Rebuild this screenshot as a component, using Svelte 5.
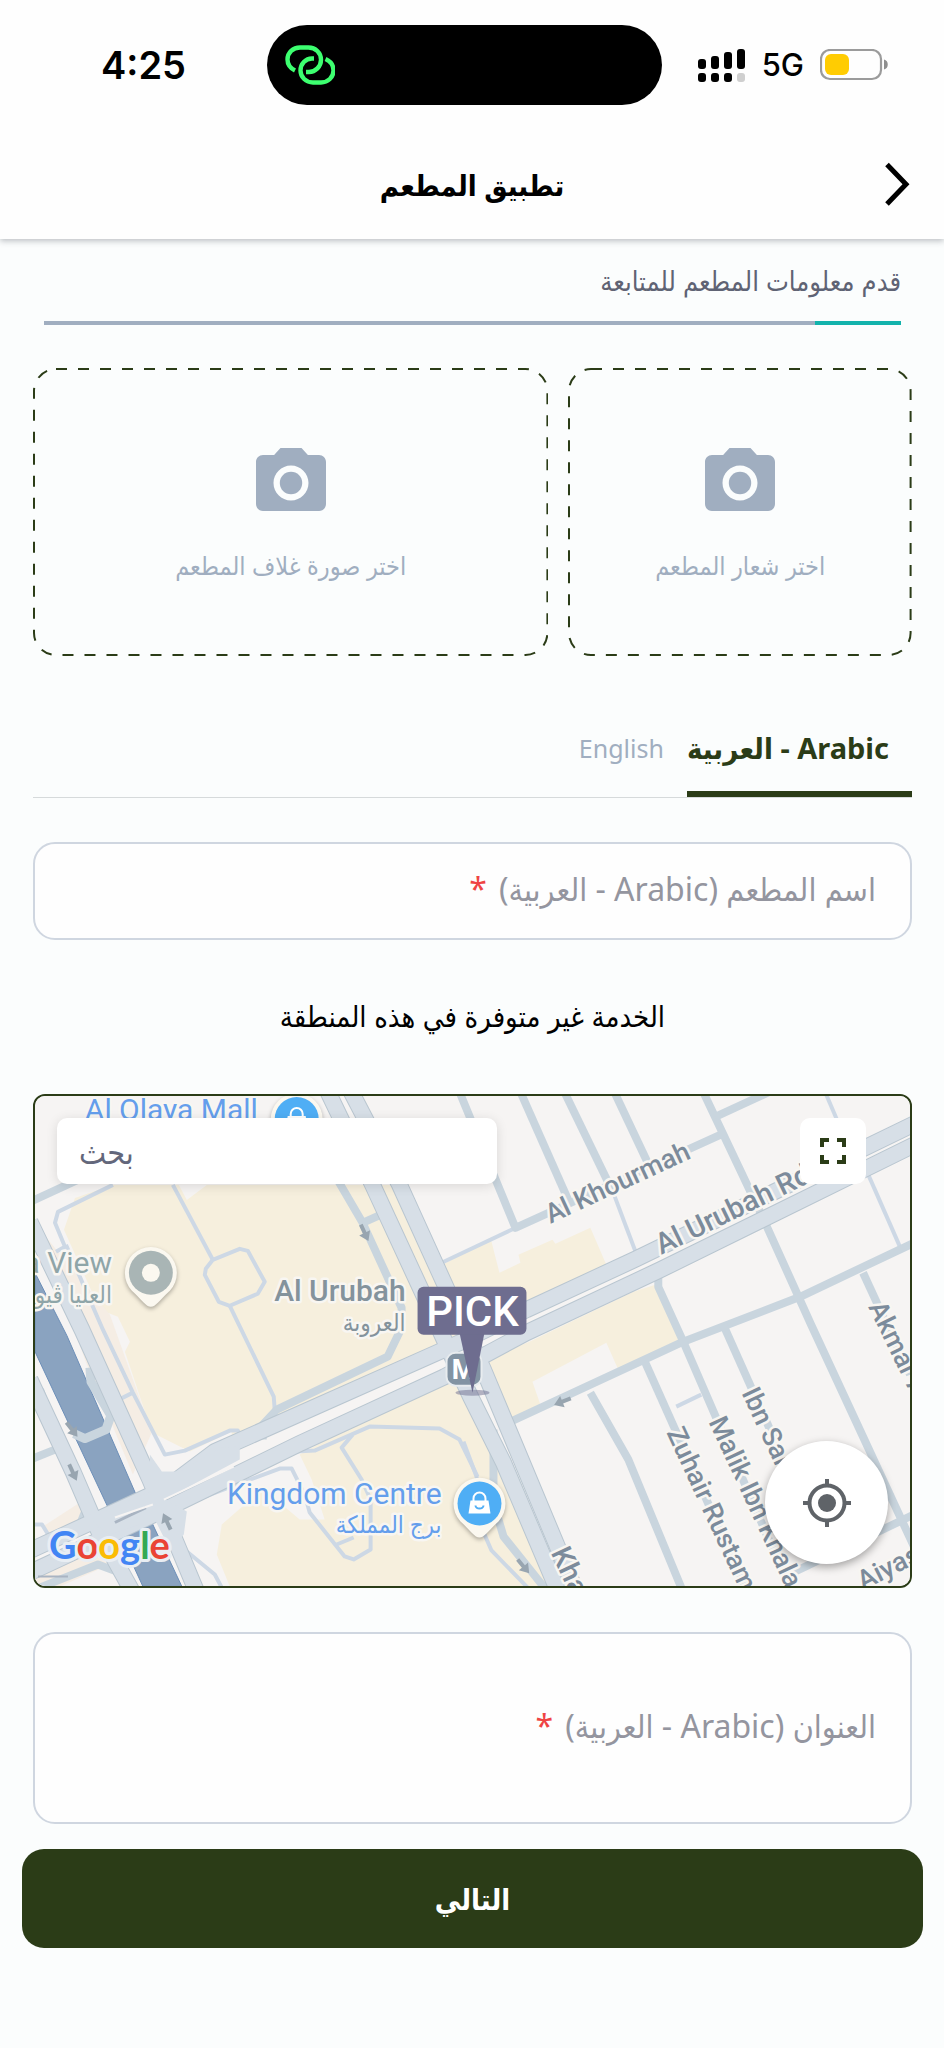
<script lang="ts">
  type Lang = 'ar' | 'en';

  const TABS: { id: Lang; label: string }[] = [
    { id: 'ar', label: 'العربية - Arabic' },
    { id: 'en', label: 'English' },
  ];

  const UPLOADS = [
    { id: 'logo', label: 'اختر شعار المطعم' },
    { id: 'cover', label: 'اختر صورة غلاف المطعم' },
  ];

  const STREETS = [
    'M460 12 516 148 721 55',
    'M521 12 571 125',
    'M565 12 614 113',
    'M615 12 649 84',
    'M704 12 766 143 812 245 901 437 920 478',
    'M716 37 770 12',
    'M915 163 801 217 684 262 509 343',
    'M864 193 911 295',
    'M659 190 659 207 684 262 790 507',
    'M724 245 820 460',
    'M646 283 746 507',
    'M591 313 629 380 684 513',
    'M915 435 790 495',
    'M338 100 363 143 402 228 402 248 388 277 277 330 263 345 263 360',
    'M30 122 80 99',
    'M494 350 494 423 504 457 548 512',
    'M30 380 60 368',
    'M40 310 52 345 88 425 80 445 60 460',
    'M35 510 98 485 125 495',
    'M363 143 383 134',
  ];

  const PATHS = [
    'M440 184 516 148',
    'M614 113 637 174',
    'M826 12 838 40',
    'M868 92 901 167',
    'M677 327 702 315',
    'M113 105 58 132 55 143 65 167 56 172',
    'M66 165 103 250 133 313 165 375 185 371 230 351 238 351 245 362',
    'M119 320 133 313',
    'M173 105 213 180',
    'M213 180 240 169 248 171 265 202 258 214 230 226 219 222 205 195 206 189Z',
    'M230 226 274 317 275 330',
    'M296 372 315 371 370 347 440 349 460 360 478 397',
    'M353 355 342 368 362 400 371 420 371 470 354 480 345 477 310 433 305 415 292 389 280 389 250 400 205 417',
    'M337 465 354 458',
    'M464 362 477 397 485 455 492 471 530 510',
    'M187 472 215 495 224 512',
    'M35 445 42 445 50 458',
  ];

  const AVENUES = [
    'M30 142 82 250 150 400 175 460 198 515',
    'M30 300 73 392 98 450 134 515',
    'M325 5 373 105 471 317 504 383 560 515',
    'M348 5 400 105 484 290 507 345 578 515',
    'M28 472 167 408 215 372 460 263 527 230 637 179 915 44',
    'M28 494 167 429 300 364 445 297 527 253 661 190 915 65',
  ];

  const ARROWS = [
    { x: 365, y: 153, a: 65 },
    { x: 72, y: 350, a: 52 },
    { x: 73, y: 393, a: 65 },
    { x: 167, y: 442, a: -115 },
    { x: 563, y: 322, a: 158 },
    { x: 524, y: 487, a: 50 },
  ];

  const ROAD_LABELS = [
    { text: 'Al Khourmah', x: 551, y: 144, a: -25, big: false },
    { text: 'Al Urubah Rd', x: 662, y: 175, a: -26, big: true },
    { text: 'Akmar A', x: 869, y: 227, a: 64, big: false },
    { text: 'Ibn Sar', x: 742, y: 313, a: 65, big: false },
    { text: 'Malik Ibn Khala', x: 709, y: 342, a: 65, big: false },
    { text: 'Zuhair Rustam', x: 667, y: 353, a: 65, big: false },
    { text: 'Kha', x: 551, y: 473, a: 65, big: true },
    { text: 'Aiyas', x: 864, y: 511, a: -27, big: false },
  ];

  let lang = $state<Lang>('ar');
  let name = $state('');
  let address = $state('');
  let query = $state('');
</script>

<div class="screen" dir="rtl">
  <div class="status" dir="ltr">
    <span class="time">4:25</span>
    <div class="island">
      <svg width="50" height="40" viewBox="0 0 50 40" fill="none" stroke="#3dff70" stroke-width="4.4" aria-hidden="true">
        <path d="M10 25.500C5 23 2.500 19 2.500 14.500 2.500 7.500 8 2.500 15 2.500h8.500c7 0 12.500 5.300 12.500 12.200 0 6.800-5.500 12.300-12 12.300H21" />
        <path d="M29 13.500h-2c-6.500 0-11.500 5.500-11.500 12 0 6.700 5.500 12 12.500 12h8C43 37.500 48.500 32.200 48.500 25.500 48.500 20.500 45.500 16.200 40.500 14" />
      </svg>
    </div>
    <div class="signals">
      <svg width="48" height="33" viewBox="0 0 48 33" aria-hidden="true">
        <rect x="0" y="10" width="8" height="10" rx="3" />
        <rect x="13" y="7" width="8" height="13" rx="3" />
        <rect x="26" y="3" width="8" height="17" rx="3" />
        <rect x="39" y="0" width="8" height="20" rx="3" />
        <rect x="0" y="24" width="8" height="9" rx="3" />
        <rect x="13" y="24" width="8" height="9" rx="3" />
        <rect x="26" y="24" width="8" height="9" rx="3" />
        <rect x="39" y="24" width="8" height="9" rx="3" fill="#cfcfcf" />
      </svg>
      <span class="network">5G</span>
      <svg width="69" height="32" viewBox="0 0 69 32" aria-hidden="true">
        <rect x="1" y="1" width="60" height="29" rx="9" fill="none" stroke="#9b9b9b" stroke-width="2.200" />
        <rect x="5" y="5" width="24" height="21" rx="6" fill="#ffcc02" />
        <path d="M64 10.500c5 1 5 9 0 10z" fill="#8e8e8e" />
      </svg>
    </div>
  </div>

  <header class="appbar">
    <button type="button" class="back" aria-label="رجوع">
      <svg width="28" height="44" viewBox="0 0 28 44" fill="none" stroke="#000" stroke-width="5" aria-hidden="true"><path d="M3 2.500 22 22.200 3 42" /></svg>
    </button>
    <h1>تطبيق المطعم</h1>
  </header>

  <main>
    <section class="progress">
      <p>قدم معلومات المطعم للمتابعة</p>
      <div class="track" role="progressbar" aria-label="التقدم" aria-valuenow="10" aria-valuemin="0" aria-valuemax="100">
        <div class="bar" style="width: {10}%"></div>
      </div>
    </section>

    <div class="uploads">
      {#each UPLOADS as item (item.id)}
        <button type="button" class="upload {item.id}">
          <svg class="dashes" aria-hidden="true"><rect x="1" y="1" rx="22" /></svg>
          <svg width="84" height="84" viewBox="0 0 24 24" fill="#a0aec0" aria-hidden="true">
            <circle cx="12" cy="12" r="3.200" />
            <path d="M9 2 7.170 4H4c-1.100 0-2 .9-2 2v12c0 1.100.9 2 2 2h16c1.100 0 2-.9 2-2V6c0-1.100-.9-2-2-2h-3.170L15 2H9zm3 15c-2.760 0-5-2.240-5-5s2.240-5 5-5 5 2.240 5 5-2.240 5-5 5z" />
          </svg>
          <span>{item.label}</span>
        </button>
      {/each}
    </div>

    <div class="tabs" role="tablist">
      {#each TABS as tab (tab.id)}
        <button
          type="button"
          role="tab"
          class="tab"
          class:on={lang === tab.id}
          aria-selected={lang === tab.id}
          dir="ltr"
          onclick={() => (lang = tab.id)}
        >
          {tab.label}
        </button>
      {/each}
    </div>

    <div class="field">
      <input id="name" type="text" bind:value={name} />
      {#if !name}
        <label for="name">اسم المطعم (Arabic - العربية) <b>*</b></label>
      {/if}
    </div>

    <p class="notice">الخدمة غير متوفرة في هذه المنطقة</p>

    <div class="map" dir="ltr">
      <svg class="tiles" viewBox="35 16 876 491" preserveAspectRatio="xMidYMid slice" role="img" aria-label="خريطة">
        <rect x="35" y="16" width="876" height="491" fill="#f6f4f3" />
        <g fill="#f6efdd">
          <path d="M113 105 75 118 64 150 82 190 100 230 118 237 130 262 125 272 152 353 190 372 232 352 232 365 300 340 470 262 400 105H207L187 120 179 105Z" />
          <path d="M300 375 430 303 470 305 500 385 550 507H230L217 475 222 445 245 425 262 408 300 440 325 440 312 400Z" />
          <path d="M443 185 491 158 500 193 521 183 519 175 553 160 556 164 591 148 607 185 475 255Z" />
          <path d="M484 280 530 262 634 212 656 205 684 262 619 290 607 263 533 302 541 325 509 342Z" />
        </g>
        <path d="M400 105 420 105 443 184 432 175Z" fill="#f6f4f3" />
        <path d="M40 150 110 235 152 353 133 395 85 280ZM43 447 80 423 85 440 55 465ZM35 490 85 470 110 485 60 507H35Z" fill="#f5ede4" />
        <path d="M35 193 67 256 137 417 110 432 35 272ZM120 457 152 443 182 507H143Z" fill="#8aa3c0" stroke="#6c8fb8" />

        <g fill="none" stroke-linejoin="round">
          {#each PATHS as d}
            <path {d} stroke="#cdd8e5" stroke-width="4" />
          {/each}
          {#each STREETS as d}
            <path {d} stroke="#c9d5de" stroke-width="8" />
          {/each}
          <path d="M90 288 91 302 111 336 106 350 85 359 74 354" stroke="#c9d5de" stroke-width="9" />
          {#each AVENUES as d}
            <path {d} stroke="#b9c6d0" stroke-width="17" />
          {/each}
          {#each AVENUES as d}
            <path {d} stroke="#d7dfe7" stroke-width="15" />
          {/each}
        </g>
        <path d="M150 375 162 392 180 392 222 368 240 367 240 380 165 420 187 432 184 455 170 470 155 440 110 455 90 440 105 432 150 412Z" fill="#d7dfe7" />
        <path d="M115 443 146 428" stroke="#a9b4c2" stroke-width="3" />
        <path d="M164 420 234 387M115 438 153 425" stroke="#f6f4f3" stroke-width="2" />

        {#each ARROWS as arrow}
          <path d="M-9-2H0V-6L9 0 0 6V2H-9Z" fill="#98a5b0" transform="translate({arrow.x} {arrow.y}) rotate({arrow.a})" />
        {/each}

        <g class="road-labels">
          {#each ROAD_LABELS as road}
            <text class:big={road.big} transform="translate({road.x} {road.y}) rotate({road.a})">{road.text}</text>
          {/each}
        </g>

        <g class="places" text-anchor="end">
          <text class="blue" x="258" y="40">Al Olaya Mall</text>
          <text class="blue" x="442" y="424">Kingdom Centre</text>
          <text class="blue ar" x="442" y="454">برج المملكة</text>
          <text class="teal" x="112" y="193">a View</text>
          <text class="teal ar" x="112" y="223">العليا ڤيو</text>
          <text class="grey" x="406" y="221">Al Urubah</text>
          <text class="grey ar" x="406" y="251">العروبة</text>
        </g>

        <g class="pin" transform="translate(151 193)">
          <path d="M0 34C-5 34-8 28-19 18A26 26 0 1 1 19 18C8 28 5 34 0 34Z" fill="#fbf8f0" />
          <circle r="22" fill="#a9b5b5" />
          <circle r="9" fill="#fbf8f0" />
        </g>
        {#each [[480, 424], [297, 39]] as [x, y]}
          <g class="pin" transform="translate({x} {y})">
            <path d="M0 34C-5 34-8 28-19 18A26 26 0 1 1 19 18C8 28 5 34 0 34Z" fill="#fbf8f0" />
            <circle r="22" fill="#4faef5" />
            <path d="M-9-3H9L11 10H-11Z" fill="#fff" />
            <path d="M-6-2V-5a6 6 0 0 1 12 0V-2" fill="none" stroke="#fff" stroke-width="2" />
            <path d="M-4 2a4 3 0 0 0 8 0" fill="none" stroke="#4faef5" stroke-width="2" />
          </g>
        {/each}

        <rect x="447" y="273" width="35" height="33" rx="9" fill="#8293a3" stroke="#e8ecef" stroke-width="2" />
        <text class="metro" x="464" y="299" text-anchor="middle">M</text>
        <ellipse cx="473" cy="313" rx="17" ry="3" fill="#6e6d8f" opacity="0.5" />
        <path d="M460 253H485L473 313Z" fill="#6e6d8f" />
        <rect x="418" y="207" width="109" height="48" rx="6" fill="#6e6d8f" />
        <text class="pick" x="473" y="246" text-anchor="middle">PICK</text>

        <path d="M38 497H68" stroke="#a9b4c2" stroke-width="2" />
        <text class="google" x="49" y="480"><tspan fill="#4285f4">G</tspan><tspan fill="#ea4335">o</tspan><tspan fill="#fbbc05">o</tspan><tspan fill="#4285f4">g</tspan><tspan fill="#34a853">l</tspan><tspan fill="#ea4335">e</tspan></text>
      </svg>

      <input class="search" type="text" placeholder="بحث" aria-label="بحث" bind:value={query} />
      <button type="button" class="expand" aria-label="ملء الشاشة">
        <svg width="26" height="26" viewBox="0 0 26 26" fill="none" stroke="#2b3c17" stroke-width="4" aria-hidden="true"><path d="M2 9V2H9M17 2H24V9M24 17V24H17M9 24H2V17" /></svg>
      </button>
      <button type="button" class="locate" aria-label="موقعي">
        <svg width="48" height="48" viewBox="0 0 48 48" fill="none" stroke="#5f6368" stroke-width="4" aria-hidden="true">
          <circle cx="24" cy="24" r="17.500" />
          <circle cx="24" cy="24" r="9" fill="#5f6368" stroke="none" />
          <path d="M24 0V6M24 42V48M0 24H6M42 24H48" />
        </svg>
      </button>
    </div>

    <div class="field">
      <textarea id="address" bind:value={address}></textarea>
      {#if !address}
        <label for="address">العنوان (Arabic - العربية) <b>*</b></label>
      {/if}
    </div>
  </main>

  <footer>
    <button type="button" class="next">التالي</button>
  </footer>
</div>

<style>
  :global(body) {
    margin: 0;
    background: #fbfdfd;
  }
  .screen {
    font-family: 'Noto Sans', 'DejaVu Sans Condensed', 'DejaVu Sans', sans-serif;
    color: #000;
    background: #fbfdfd;
    overflow: hidden;
  }
  button,
  input,
  textarea {
    font: inherit;
    box-sizing: border-box;
    margin: 0;
  }
  button {
    padding: 0;
    border: 0;
    background: none;
    cursor: pointer;
  }
  p,
  h1 {
    margin: 0;
  }
  svg {
    display: block;
    flex-shrink: 0;
  }

  .status {
    position: relative;
    z-index: 1;
    display: grid;
    grid-template-columns: 1fr 395px 1fr;
    align-items: center;
    padding: 25px 16px 25px 0;
    background: #fefefe;
    font-family: Inter, sans-serif;
  }
  .time {
    padding-left: 101px;
    font-size: 38px;
    font-weight: 600;
    line-height: 46px;
  }
  .island {
    display: flex;
    align-items: center;
    height: 80px;
    padding-left: 18px;
    border-radius: 40px;
    background: #000;
    box-sizing: border-box;
  }
  .signals {
    display: flex;
    align-items: center;
    justify-content: flex-end;
    gap: 16px;
    padding-right: 39px;
  }
  .network {
    font-size: 31px;
    font-weight: 500;
    line-height: 40px;
  }

  .appbar {
    position: relative;
    display: flex;
    align-items: center;
    justify-content: center;
    height: 109px;
    background: #fefefe;
    box-shadow: 0 2px 6px rgba(40, 45, 60, 0.3);
  }
  .back {
    position: absolute;
    right: 32px;
    top: 32px;
  }
  h1 {
    font-size: 29px;
    font-weight: 600;
    line-height: 48px;
  }

  main {
    padding: 20px 32px 0 33px;
  }
  .progress {
    padding: 0 11px;
  }
  .progress p {
    color: #5f6374;
    font-size: 27px;
    line-height: 44px;
  }
  .track {
    height: 4px;
    margin-top: 18px;
    background: #a0aec0;
  }
  .bar {
    height: 4px;
    background: #12b3ac;
  }

  .uploads {
    display: flex;
    gap: 20px;
    margin-top: 43px;
  }
  .upload {
    position: relative;
    display: flex;
    flex-direction: column;
    align-items: center;
    justify-content: center;
    gap: 20px;
    flex: 2 1 0;
    height: 288px;
    padding-top: 2px;
    color: #a0aec0;
    font-size: 25px;
    line-height: 40px;
  }
  .upload.cover {
    flex-grow: 3;
  }
  .dashes {
    position: absolute;
    inset: 0;
    width: 100%;
    height: 100%;
  }
  .dashes rect {
    width: calc(100% - 2px);
    height: calc(100% - 2px);
    fill: none;
    stroke: #2b3c17;
    stroke-width: 2px;
    stroke-dasharray: 11 11;
  }

  .tabs {
    display: flex;
    margin-top: 61px;
    border-bottom: 1px solid #d6dadb;
  }
  .tab {
    height: 80px;
    padding: 0 0 12px;
    padding-right: 23px;
    border-bottom: 6px solid transparent;
    color: #a0aec0;
    font-size: 25px;
    line-height: 40px;
  }
  .tab.on {
    border-bottom-color: #2b3c17;
    color: #2b3c17;
    font-size: 29px;
    font-weight: 700;
  }

  .field {
    position: relative;
    margin-top: 44px;
  }
  .field input,
  .field textarea {
    display: block;
    width: 100%;
    height: 98px;
    padding: 0 34px;
    border: 2px solid #cfd6e0;
    border-radius: 22px;
    background: #fefefe;
    font-size: 32px;
    resize: none;
    outline: none;
  }
  .field textarea {
    height: 192px;
    padding-top: 70px;
  }
  .field label {
    position: absolute;
    inset: 0 36px 4px;
    display: flex;
    align-items: center;
    gap: 12px;
    color: #94959f;
    font-size: 32px;
    line-height: 40px;
    pointer-events: none;
  }
  .field b {
    color: #ef4444;
    font-weight: 400;
  }

  .notice {
    margin-top: 52px;
    text-align: center;
    font-size: 29px;
    line-height: 48px;
  }

  .map {
    position: relative;
    margin-top: 54px;
    border: 2px solid #2b3c17;
    border-radius: 12px;
    overflow: hidden;
  }
  .tiles {
    width: 100%;
    height: auto;
  }
  .tiles text {
    font-family: Roboto, 'DejaVu Sans Condensed', 'DejaVu Sans', sans-serif;
    paint-order: stroke;
    stroke: #f8f6f2;
    stroke-width: 5px;
    stroke-linejoin: round;
  }
  .tiles .road-labels text {
    fill: #7c8b9b;
    font-size: 27px;
    font-weight: 500;
  }
  .tiles .road-labels .big {
    font-size: 29px;
  }
  .tiles .places text {
    font-size: 30px;
  }
  .tiles .places .ar {
    font-size: 24px;
  }
  .places .blue {
    fill: #649eec;
  }
  .places .teal {
    fill: #8fa5a8;
  }
  .places .grey {
    fill: #84939c;
    font-weight: 500;
  }
  .tiles .metro {
    fill: #fff;
    stroke: none;
    font-size: 27px;
    font-weight: 700;
  }
  .tiles .pick {
    fill: #fff;
    stroke: none;
    font-size: 42px;
    font-weight: 500;
  }
  .tiles .google {
    font-family: Lato, sans-serif;
    font-size: 38px;
    font-weight: 700;
    stroke: #e9eef3;
    stroke-width: 6px;
  }
  .pin {
    filter: drop-shadow(0 2px 2px rgba(0, 0, 0, 0.3));
  }
  .search {
    position: absolute;
    top: 22px;
    left: 22px;
    width: 50.300%;
    height: 66px;
    padding: 0 22px;
    border: 0;
    border-radius: 10px;
    background: #fff;
    box-shadow: 0 2px 12px rgba(0, 0, 0, 0.12);
    font-size: 32px;
    outline: none;
  }
  .search::placeholder {
    color: #63677b;
    opacity: 1;
  }
  .expand {
    position: absolute;
    top: 22px;
    right: 44px;
    display: grid;
    place-items: center;
    width: 66px;
    height: 66px;
    border-radius: 10px;
    background: #fff;
  }
  .locate {
    position: absolute;
    right: 22px;
    bottom: 22px;
    display: grid;
    place-items: center;
    width: 123px;
    height: 123px;
    border-radius: 50%;
    background: #fff;
    box-shadow: 0 3px 8px rgba(0, 0, 0, 0.35);
  }

  footer {
    padding: 25px 21px 100px 22px;
  }
  .next {
    display: block;
    width: 100%;
    height: 99px;
    border-radius: 22px;
    background: #2b3c17;
    color: #fff;
    font-size: 29px;
    font-weight: 600;
  }
</style>
